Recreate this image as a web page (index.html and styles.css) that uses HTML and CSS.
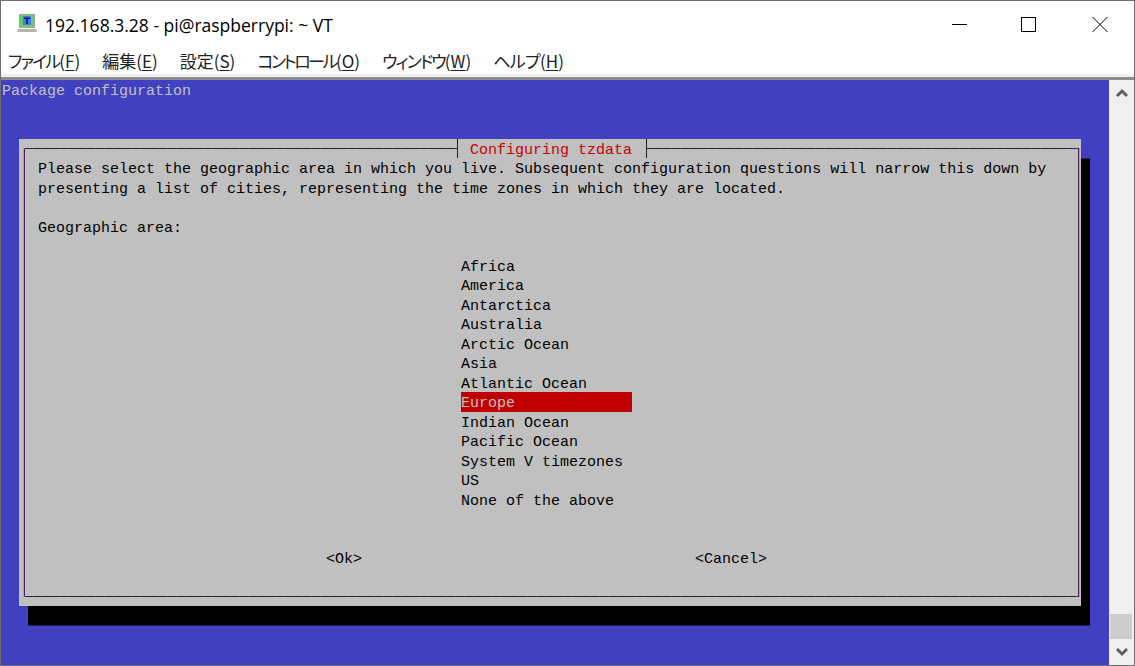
FILE: index.html
```html
<!DOCTYPE html>
<html lang="ja">
<head>
<meta charset="utf-8">
<title>192.168.3.28 - pi@raspberrypi: ~ VT</title>
<link rel="stylesheet" href="styles.css">
</head>
<body>
<div class="window">
  <header class="titlebar">
    <svg class="app-icon" width="22" height="20" viewBox="0 0 22 20">
      <rect x="3" y="0" width="16" height="14" fill="#a4a4a4"/>
      <rect x="4" y="1" width="14" height="12" fill="#63d063"/>
      <rect x="7" y="2" width="8" height="9" fill="#3f7fe0"/>
      <path d="M8 3.5h6v1.5h-2.2V10h-1.6V5H8z" fill="#0c1c70"/>
      <path d="M2 15h18l1 3H1z" fill="#b4b4b4"/>
    </svg>
    <span class="title-text">192.168.3.28 - pi@raspberrypi: ~ VT</span>
    <div class="controls">
      <svg class="ctl ctl-min" width="16" height="16" viewBox="0 0 16 16"><path d="M0 8.5h15" stroke="#000" fill="none"/></svg>
      <svg class="ctl ctl-max" width="16" height="16" viewBox="0 0 16 16"><rect x="0.5" y="1.5" width="14" height="14" stroke="#000" fill="none"/></svg>
      <svg class="ctl" width="16" height="16" viewBox="0 0 16 16"><path d="M0.5 1l15 15M15.5 1l-15 15" stroke="#000" fill="none"/></svg>
    </div>
  </header>
  <nav class="menubar">
    <span><span class="kana-a">ファイル</span>(<u>F</u>)</span>
    <span>編集(<u>E</u>)</span>
    <span>設定(<u>S</u>)</span>
    <span><span class="kana-b">コントロール</span>(<u>O</u>)</span>
    <span><span class="kana-a">ウィンドウ</span>(<u>W</u>)</span>
    <span><span class="kana-c">ヘルプ</span>(<u>H</u>)</span>
  </nav>
  <main class="client">
    <section class="screen">
      <div class="line backtitle">Package configuration</div>
      <div class="dialog">
        <div class="frame">
          <div class="dialog-title line">Configuring tzdata</div>
          <div class="line">Please select the geographic area in which you live. Subsequent configuration questions will narrow this down by</div>
          <div class="line">presenting a list of cities, representing the time zones in which they are located.</div>
          <div class="line">&nbsp;</div>
          <div class="line">Geographic area:</div>
          <div class="line">&nbsp;</div>
          <ul class="list">
            <li class="line">Africa</li>
            <li class="line">America</li>
            <li class="line">Antarctica</li>
            <li class="line">Australia</li>
            <li class="line">Arctic Ocean</li>
            <li class="line">Asia</li>
            <li class="line">Atlantic Ocean</li>
            <li class="line selected">Europe</li>
            <li class="line">Indian Ocean</li>
            <li class="line">Pacific Ocean</li>
            <li class="line">System V timezones</li>
            <li class="line">US</li>
            <li class="line">None of the above</li>
          </ul>
          <div class="buttons line">
            <span class="btn-ok">&lt;Ok&gt;</span>
            <span class="btn-cancel">&lt;Cancel&gt;</span>
          </div>
        </div>
      </div>
    </section>
    <aside class="scrollbar">
      <svg width="14" height="10" viewBox="0 0 14 10"><path d="M2 8l5-5 5 5" stroke="#606060" stroke-width="3" fill="none"/></svg>
      <div class="track"><div class="thumb"></div></div>
      <svg width="14" height="10" viewBox="0 0 14 10"><path d="M2 2l5 5 5-5" stroke="#606060" stroke-width="3" fill="none"/></svg>
    </aside>
  </main>
</div>
</body>
</html>
```
FILE: styles.css
```css
* { box-sizing: border-box; }
html, body { margin: 0; padding: 0; height: 100%; overflow: hidden; background: #fff; }
.window {
  width: 1135px; height: 666px;
  display: flex; flex-direction: column;
  border: 1px solid #6e6e6e;
  background: #fff;
}
.titlebar {
  height: 43px; flex: none;
  display: flex; align-items: center;
  padding: 3px 0 0 15px;
  font: 17.5px "Open Sans", "Noto Sans", sans-serif;
  color: #000;
}
.app-icon { flex: none; margin-right: 7px; }
.title-text { white-space: nowrap; margin-top: 2px; }
.controls { margin-left: auto; display: flex; align-items: center; padding-right: 26px; }
.ctl { display: block; }
.ctl-min { margin-right: 53px; }
.ctl-max { margin-right: 55px; }
.menubar {
  height: 36px; flex: none;
  display: flex; align-items: center; gap: 22px;
  padding: 0 0 1px 7px;
  font: 17px "Noto Sans CJK JP", sans-serif;
  font-feature-settings: "palt";
  color: #222;
  background: #fff;
  border-bottom: 3px solid #8f8f8f;
  box-shadow: inset 0 -3px 0 #f0f0f0;
}
.menubar u { text-underline-offset: 2px; }
.kana-a { letter-spacing: -1.9px; }
.kana-b { letter-spacing: -2.5px; }
.kana-c { letter-spacing: -0.7px; }
.client { flex: 1; display: flex; min-height: 0; }
.screen {
  flex: 1; min-width: 0;
  background: #4040c0;
  color: #000;
  font: 15px/19.5px "Liberation Mono", monospace;
  padding: 0 0 0 1px;
}
.line { height: 19.5px; line-height: 19.5px; padding-top: 2px; white-space: pre; }
.backtitle { color: #c0c0c0; }
.dialog {
  margin: 39px 0 0 17px;
  width: 1062px; height: 467.5px;
  background: #c0c0c0;
  box-shadow: 9px 19.5px 0 #000;
  padding: 9.5px 2px 0 5px;
}
.frame {
  position: relative;
  height: 449px;
  border: 1px solid transparent;
  border-left-color: #4c2058;
  border-right-color: #4c2058;
  background:
    repeating-linear-gradient(90deg, #2a2a2a 0 8px, #4a4a4a 8px 9px) 0 0 / 100% 1px no-repeat border-box,
    repeating-linear-gradient(90deg, #2a2a2a 0 8px, #4a4a4a 8px 9px) 0 100% / 100% 1px no-repeat border-box;
  box-shadow: -1px 0 0 #b4a67c, 1px 0 0 #b4a67c;
  padding: 9px 0 0 13px;
}
.dialog-title {
  position: absolute;
  top: -10.5px; left: 432px;
  width: 190px;
  background: #c0c0c0;
  border-left: 1px solid #222;
  border-right: 1px solid #222;
  padding-left: 12px;
  color: #c80000;
}
.list { list-style: none; margin: 0; padding: 0 0 0 423px; }
.selected {
  width: 171px;
  background: #c00000;
  color: #c0c0c0;
}
.buttons {
  display: flex;
  margin-top: 39px;
  padding-left: 288px;
}
.btn-ok { width: 369px; }
.scrollbar {
  width: 25px; flex: none;
  background: #f0f0f0;
  border-left: 1px solid #e8e8ff;
  display: flex; flex-direction: column; align-items: center;
  padding: 8px 0;
}
.scrollbar svg { display: block; flex: none; }
.track { flex: 1; width: 100%; display: flex; align-items: flex-end; padding: 0 2px 8px 0; }
.thumb { width: 100%; height: 25px; background: #cdcdcd; }
```
